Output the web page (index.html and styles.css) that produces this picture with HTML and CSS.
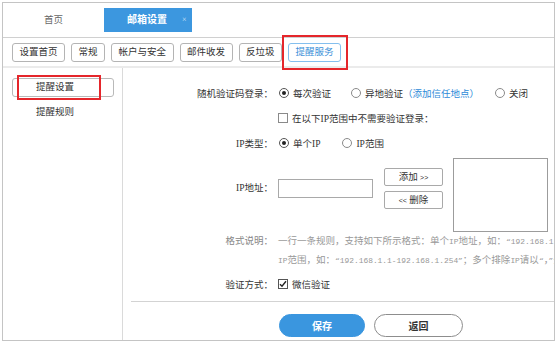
FILE: index.html
```html
<!DOCTYPE html>
<html>
<head>
<meta charset="utf-8">
<link rel="stylesheet" href="styles.css">
</head>
<body>
<div class="frame">
  <div class="tabs">
    <div class="tab">首页</div>
    <div class="tab active"><span>邮箱设置</span><span class="close">×</span></div>
  </div>
  <div class="toolbar">
    <button class="tb">设置首页</button>
    <button class="tb">常规</button>
    <button class="tb">帐户与安全</button>
    <button class="tb">邮件收发</button>
    <button class="tb">反垃圾</button>
    <button class="tb current">提醒服务</button>
  </div>
  <div class="body">
    <aside class="side">
      <div class="side-item sel">提醒设置</div>
      <div class="side-item">提醒规则</div>
    </aside>
    <main class="main">
      <div class="form">
        <div class="row">
          <div class="lbl">随机验证码登录：</div>
          <div class="ctl">
            <span class="opt o1"><span class="radio on"></span>每次验证</span>
            <span class="opt o2"><span class="radio"></span>异地验证<a class="link">（添加信任地点）</a></span>
            <span class="opt"><span class="radio"></span>关闭</span>
          </div>
        </div>
        <div class="row">
          <div class="lbl"></div>
          <div class="ctl">
            <span class="opt"><span class="check"></span>在以下IP范围中不需要验证登录：</span>
          </div>
        </div>
        <div class="row">
          <div class="lbl">IP类型：</div>
          <div class="ctl">
            <span class="opt o3"><span class="radio on"></span>单个IP</span>
            <span class="opt"><span class="radio"></span>IP范围</span>
          </div>
        </div>
        <div class="row-ip">
          <div class="lbl ip-lbl">IP地址：</div>
          <div class="ip-input"></div>
          <div class="ip-btns">
            <button class="small-btn">添加 <span class="arr">&gt;&gt;</span></button>
            <button class="small-btn"><span class="arr">&lt;&lt;</span> 删除</button>
          </div>
          <div class="ip-list"></div>
        </div>
        <div class="row-note">
          <div class="lbl note-lbl">格式说明：</div>
          <div class="note">
            <div>一行一条规则，支持如下所示格式：单个<span class="en">IP</span>地址，如：<span class="en">“192.168.1.1”</span>；</div>
            <div><span class="en">IP</span>范围，如：<span class="en">“192.168.1.1-192.168.1.254”</span>；多个排除<span class="en">IP</span>请以<span class="en">“</span>，<span class="en">”</span>分隔。</div>
          </div>
        </div>
        <div class="row row-way">
          <div class="lbl">验证方式：</div>
          <div class="ctl">
            <span class="opt"><span class="check checked"><svg width="8" height="8" viewBox="0 0 8 8"><path d="M1 4.2 L3 6.2 L7 1.2" fill="none" stroke="#222" stroke-width="1.4"/></svg></span>微信验证</span>
          </div>
        </div>
      </div>
      <div class="footer">
        <button class="btn primary">保存</button>
        <button class="btn back">返回</button>
      </div>
    </main>
  </div>
  <div class="mark mark-tab"></div>
  <div class="mark mark-side"></div>
</div>
</body>
</html>
```
FILE: styles.css
```css
html, body {
  margin: 0;
  background: #fff;
}
body {
  padding: 2px;
  font-family: "Liberation Serif", "Noto Sans CJK SC", sans-serif;
  font-size: 9.5px;
  color: #333;
}
.en {
  font-family: "Liberation Mono", monospace;
  font-size: 7.9px;
}
.arr {
  font-family: "Liberation Sans", sans-serif;
  font-size: 7px;
}
.frame {
  position: relative;
  width: 551px;
  height: 337px;
  border: 1px solid #c4c4c4;
  overflow: hidden;
}
.tabs {
  box-sizing: border-box;
  height: 35px;
  padding-top: 5px;
  border-bottom: 1px solid #d0d0d0;
  display: flex;
  align-items: flex-start;
}
.tab {
  width: 101px;
  height: 24px;
  line-height: 24px;
  text-align: center;
  color: #666;
}
.tab.active {
  width: 88px;
  box-sizing: border-box;
  padding-left: 23px;
  display: flex;
  text-align: left;
  background: #3c97df;
  color: #fff;
  font-weight: bold;
  font-size: 10px;
}
.close {
  margin-left: 15px;
  font-weight: normal;
  font-size: 8px;
  color: #cfe3f5;
}
.toolbar {
  box-sizing: border-box;
  height: 30px;
  padding: 5px 0 0 9px;
  border-bottom: 2px solid #ebebeb;
  display: flex;
  align-items: flex-start;
  gap: 6px;
}
.tb {
  height: 19px;
  box-sizing: border-box;
  border: 1px solid #b4b4b4;
  border-radius: 3px;
  background: #fff;
  padding: 0 6.5px;
  font: inherit;
  line-height: 17px;
  color: #333;
}
.tb.current {
  border-color: #84bfee;
  color: #3b8fd8;
}
.body {
  display: flex;
  height: 272px;
}
.side {
  box-sizing: border-box;
  width: 120px;
  padding: 10px 8px 0 9px;
  border-right: 1px solid #dadada;
}
.side-item {
  box-sizing: border-box;
  height: 19px;
  line-height: 17px;
  padding-left: 23px;
  margin-bottom: 6px;
  border: 1px solid transparent;
  border-radius: 3px;
}
.side-item.sel {
  border-color: #b9b9b9;
}
.main {
  flex: 1;
  overflow: hidden;
}
.form {
  padding-top: 12px;
}
.row {
  display: flex;
  align-items: center;
  height: 25px;
}
.lbl {
  flex: none;
  width: 150px;
  text-align: right;
  white-space: nowrap;
}
.ctl {
  display: flex;
  align-items: center;
  margin-left: 5px;
  white-space: nowrap;
}
.opt {
  display: inline-flex;
  align-items: center;
}
.o1 { margin-right: 19px; }
.o2 { margin-right: 15px; }
.o3 { margin-right: 21px; }
.radio {
  box-sizing: border-box;
  width: 10px;
  height: 10px;
  margin: 0 4px 0 1px;
  border: 1px solid #8a8a8a;
  border-radius: 50%;
  display: flex;
  align-items: center;
  justify-content: center;
}
.radio.on {
  border-color: #555;
}
.radio.on::after {
  content: "";
  width: 4px;
  height: 4px;
  border-radius: 50%;
  background: #222;
}
.link {
  color: #2d8ad8;
}
.check {
  box-sizing: border-box;
  width: 10px;
  height: 10px;
  margin-right: 4px;
  border: 1px solid #8a8a8a;
  display: flex;
  align-items: center;
  justify-content: center;
}
.check.checked {
  border-color: #555;
}
.check svg {
  display: block;
}
.row-ip {
  display: flex;
  align-items: flex-start;
  height: 74px;
  margin-top: 3px;
}
.ip-lbl {
  margin-top: 21px;
  line-height: 19px;
}
.ip-input {
  box-sizing: border-box;
  width: 95px;
  height: 19px;
  margin: 21px 0 0 5px;
  border: 1px solid #a9a9a9;
}
.ip-btns {
  display: flex;
  flex-direction: column;
  gap: 5px;
  margin: 10px 0 0 11px;
}
.small-btn {
  box-sizing: border-box;
  width: 59px;
  height: 18px;
  border: 1px solid #a9a9a9;
  border-radius: 2px;
  background: #fff;
  font: inherit;
  line-height: 16px;
  color: #333;
  padding: 0;
}
.ip-list {
  box-sizing: border-box;
  width: 95px;
  height: 74px;
  margin-left: 10px;
  border: 1px solid #9c9c9c;
}
.row-note {
  display: flex;
  line-height: 18px;
  color: #999;
}
.note-lbl {
  color: #888;
}
.note {
  margin-left: 5px;
  white-space: nowrap;
}
.row-way {
  margin-top: 2px;
  height: 24px;
}
.footer {
  margin: 5px 0 0 8px;
  border-top: 1px solid #d3d3d3;
  padding: 12px 0 0 148px;
  display: flex;
  gap: 9px;
}
.btn {
  box-sizing: border-box;
  width: 86px;
  height: 23px;
  border-radius: 12px;
  font: inherit;
  font-weight: bold;
  font-size: 10px;
  padding: 0;
}
.btn.primary {
  background: #3a96df;
  border: 1px solid #3a96df;
  color: #fff;
}
.btn.back {
  width: 89px;
  background: #fff;
  border: 1px solid #8d8d8d;
  color: #333;
}
.mark {
  position: absolute;
  box-sizing: border-box;
  border: 2px solid #e5262b;
}
.mark-tab {
  left: 279px;
  top: 32px;
  width: 66px;
  height: 35px;
}
.mark-side {
  left: 14px;
  top: 72px;
  width: 84px;
  height: 25px;
}
```
